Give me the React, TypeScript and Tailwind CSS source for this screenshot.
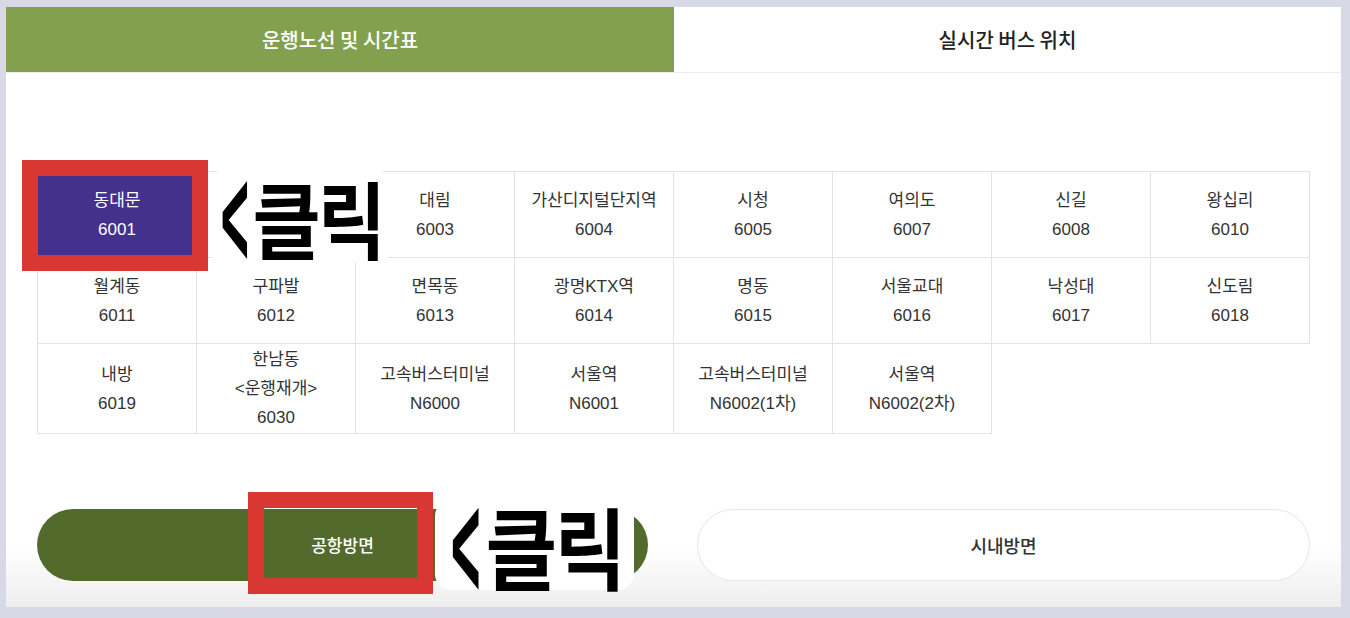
import React from 'react';

const routes = [
  { name: '동대문', code: '6001', active: true },
  { name: '', code: '' },
  { name: '대림', code: '6003' },
  { name: '가산디지털단지역', code: '6004' },
  { name: '시청', code: '6005' },
  { name: '여의도', code: '6007' },
  { name: '신길', code: '6008' },
  { name: '왕십리', code: '6010' },
  { name: '월계동', code: '6011' },
  { name: '구파발', code: '6012' },
  { name: '면목동', code: '6013' },
  { name: '광명KTX역', code: '6014' },
  { name: '명동', code: '6015' },
  { name: '서울교대', code: '6016' },
  { name: '낙성대', code: '6017' },
  { name: '신도림', code: '6018' },
  { name: '내방', code: '6019' },
  { name: '한남동', note: '<운행재개>', code: '6030' },
  { name: '고속버스터미널', code: 'N6000' },
  { name: '서울역', code: 'N6001' },
  { name: '고속버스터미널', code: 'N6002(1차)' },
  { name: '서울역', code: 'N6002(2차)' },
];

function ClickNote({ className, big }: { className: string; big?: boolean }) {
  return (
    <div className={`absolute bg-white rounded-2xl flex items-center justify-center whitespace-nowrap ${className}`}>
      <span
        className={`flex items-center leading-none font-bold text-black font-['Noto_Sans_CJK_KR',sans-serif] ${
          big ? 'text-[82px] tracking-[-3px]' : 'text-[78px] tracking-[-3px]'
        }`}
      >
        <span className="inline-block font-['DejaVu_Sans',sans-serif] font-bold [transform:scale(0.5,1.75)] -ml-[10px] -mr-[16px]">
          &lt;
        </span>
        <span className="inline-block [transform:scale(0.95,1.08)]">클릭</span>
      </span>
    </div>
  );
}

export default function App() {
  return (
    <div className="w-[1350px] h-[618px] bg-[#d7d9e6] pt-[7px] pl-[6px] font-['Liberation_Sans','Noto_Sans_CJK_KR',sans-serif]">
      <div className="relative w-[1335px] h-[600px] bg-gradient-to-b from-white from-[90%] to-[#eeeeef] overflow-hidden">
        {/* Tabs */}
        <div className="flex h-[66px] border-b border-[#ececec]">
          <div className="w-[668px] bg-[#82a04e] flex items-center justify-center text-white text-[20px] font-medium font-['Noto_Sans_CJK_KR',sans-serif]">
            운행노선 및 시간표
          </div>
          <div className="flex-1 bg-white flex items-center justify-center text-[#222] text-[20px] font-medium font-['Noto_Sans_CJK_KR',sans-serif]">
            실시간 버스 위치
          </div>
        </div>

        {/* Route grid */}
        <div className="mt-[98px] mx-[31px] grid grid-cols-8 border-t border-l border-[#e3e3e3]">
          {routes.map((r, i) => (
            <div
              key={i}
              className={`min-h-[86px] py-px flex flex-col items-center justify-center border-r border-b border-[#e3e3e3] text-[17px] leading-[29px] ${
                r.active ? 'bg-[#44318d] text-white' : 'text-[#333]'
              }`}
            >
              <span>{r.name}</span>
              {r.note && <span>{r.note}</span>}
              <span>{r.code}</span>
            </div>
          ))}
        </div>

        {/* Direction buttons */}
        <div className="mt-[75px] mx-[31px] flex gap-[49px]">
          <button className="flex-1 h-[72px] rounded-full bg-[#526b2d] text-white text-[17px] font-medium font-['Noto_Sans_CJK_KR',sans-serif]">
            공항방면
          </button>
          <button className="flex-1 h-[72px] rounded-full bg-white border border-[#e6e6e6] text-[#333] text-[18px] font-medium font-['Noto_Sans_CJK_KR',sans-serif]">
            시내방면
          </button>
        </div>

        {/* Annotations */}
        <div className="absolute left-[16px] top-[153px] w-[186px] h-[111px] border-[16px] border-[#d93832]" />
        <ClickNote className="left-[202px] top-[163px] w-[184px] h-[92px]" />
        <div className="absolute left-[242px] top-[485px] w-[185px] h-[102px] border-[16px] border-[#d93832]" />
        <ClickNote big className="left-[429px] top-[493px] w-[199px] h-[90px]" />
      </div>
    </div>
  );
}
